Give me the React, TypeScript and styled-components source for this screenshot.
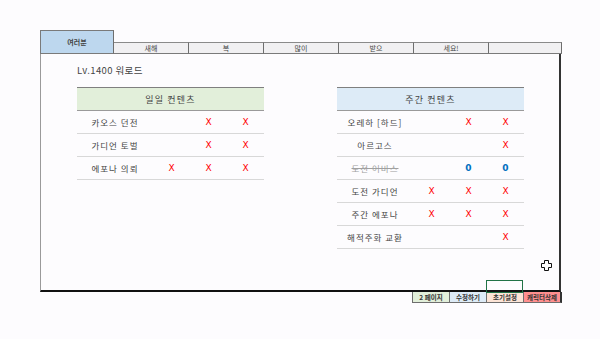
import React from "react";
import styled, { createGlobalStyle } from "styled-components";

const Global = createGlobalStyle`
  html, body { margin: 0; padding: 0; background: #fdfcfe; }
  body { font-family: "Noto Sans CJK KR", "Noto Sans", sans-serif; }
`;

const Page = styled.div`
  width: 600px;
  height: 339px;
  padding: 30px 0 0 40px;
  box-sizing: border-box;
  background: #fdfcfe;
`;

const TabBar = styled.div`
  display: flex;
  align-items: flex-end;
  width: 522px;
`;

const Tab = styled.div<{ $active?: boolean }>`
  width: ${(p) => (p.$active ? "74px" : "75px")};
  height: ${(p) => (p.$active ? "22px" : "10px")};
  box-sizing: content-box;
  display: flex;
  align-items: center;
  justify-content: center;
  font-size: 7px;
  line-height: 1;
  color: #444;
  font-weight: ${(p) => (p.$active ? 700 : 400)};
  background: ${(p) => (p.$active ? "#bdd7ee" : "#f1f0f2")};
  border-top: 1px solid ${(p) => (p.$active ? "#7a7a7a" : "#8a8a8a")};
  border-right: 1px solid #6e6e6e;
  border-bottom: 1px solid #7a7a7a;
  &:first-child { border-left: 1px solid #7a7a7a; width: 73px; }
  &:last-child { width: 73px; }
`;

const Panel = styled.div`
  position: relative;
  width: 521px;
  height: 238px;
  border-left: 1px solid #9a9a9a;
  border-right: 2px solid #333;
  border-bottom: 2px solid #111;
  box-sizing: border-box;
  padding: 10px 0 0 36px;
  display: flex;
  flex-direction: column;
`;

const Title = styled.div`
  font-size: 9.5px;
  color: #444;
  height: 12px;
  line-height: 12px;
  letter-spacing: 0.4px;
`;

const Tables = styled.div`
  display: flex;
  gap: 73px;
  margin-top: 11px;
`;

const Table = styled.div`
  width: 187px;
  display: flex;
  flex-direction: column;
`;

const Header = styled.div<{ $bg: string }>`
  height: 22px;
  background: ${(p) => p.$bg};
  border-top: 1px solid #7f7f7f;
  border-bottom: 1px solid #9a9a9a;
  display: flex;
  align-items: center;
  justify-content: center;
  font-size: 9px;
  color: #444;
  letter-spacing: 1.2px;
`;

const Row = styled.div`
  height: 22px;
  display: grid;
  grid-template-columns: 76px 37px 37px 37px;
  align-items: center;
  border-bottom: 1px solid #d8d8d8;
`;

const Name = styled.div<{ $strike?: boolean }>`
  text-align: center;
  font-size: 8.5px;
  letter-spacing: 1px;
  color: ${(p) => (p.$strike ? "#a0a0a0" : "#444")};
  text-decoration: ${(p) => (p.$strike ? "line-through" : "none")};
`;

const Mark = styled.div<{ $kind: string }>`
  text-align: center;
  font-family: "DejaVu Sans", sans-serif;
  font-size: 9px;
  font-weight: ${(p) => (p.$kind === "O" ? 700 : 400)};
  color: ${(p) => (p.$kind === "O" ? "#0070c0" : "#ff0000")};
`;

const Footer = styled.div`
  display: flex;
  width: 522px;
  justify-content: flex-end;
`;

const FootTab = styled.div<{ $bg: string }>`
  width: 36px;
  height: 10px;
  background: ${(p) => p.$bg};
  border-right: 1px solid #6e6e6e;
  border-bottom: 1px solid #6e6e6e;
  display: flex;
  align-items: center;
  justify-content: center;
  font-size: 6.5px;
  font-weight: 700;
  color: #333;
  &:first-child { border-left: 1px solid #6e6e6e; }
  &:last-child { border-right: 2px solid #333; }
`;

const Selection = styled.div`
  position: absolute;
  left: 445px;
  top: 226px;
  width: 35px;
  height: 11px;
  border: 1px solid #217346;
`;

const Cursor = styled.svg`
  position: absolute;
  left: 500px;
  top: 206px;
`;

type Item = { name: string; marks: string[]; strike?: boolean };

const daily: Item[] = [
  { name: "카오스 던전", marks: ["", "X", "X"] },
  { name: "가디언 토벌", marks: ["", "X", "X"] },
  { name: "에포나 의뢰", marks: ["X", "X", "X"] },
];

const weekly: Item[] = [
  { name: "오레하 [하드]", marks: ["", "X", "X"] },
  { name: "아르고스", marks: ["", "", "X"] },
  { name: "도전 어비스", marks: ["", "0", "0"], strike: true },
  { name: "도전 가디언", marks: ["X", "X", "X"] },
  { name: "주간 에포나", marks: ["X", "X", "X"] },
  { name: "해적주화 교환", marks: ["", "", "X"] },
];

const ContentTable = ({ title, bg, items }: { title: string; bg: string; items: Item[] }) => (
  <Table>
    <Header $bg={bg}>{title}</Header>
    {items.map((it) => (
      <Row key={it.name}>
        <Name $strike={it.strike}>{it.name}</Name>
        {it.marks.map((m, i) => (
          <Mark key={i} $kind={m === "0" ? "O" : "X"}>{m}</Mark>
        ))}
      </Row>
    ))}
  </Table>
);

export default function App() {
  return (
    <Page>
      <Global />
      <TabBar>
        <Tab $active>여러분</Tab>
        <Tab>새해</Tab>
        <Tab>복</Tab>
        <Tab>많이</Tab>
        <Tab>받으</Tab>
        <Tab>세요!</Tab>
        <Tab></Tab>
      </TabBar>
      <Panel>
        <Title>Lv.1400 워로드</Title>
        <Tables>
          <ContentTable title="일일 컨텐츠" bg="#e2efda" items={daily} />
          <ContentTable title="주간 컨텐츠" bg="#ddebf7" items={weekly} />
        </Tables>
        <Selection />
        <Cursor width="11" height="11" viewBox="0 0 11 11">
          <path d="M3.5 0.5h4v3h3v4h-3v3h-4v-3h-3v-4h3z" fill="#fff" stroke="#111" strokeWidth="1" />
        </Cursor>
      </Panel>
      <Footer>
        <FootTab $bg="#e2efda">2 페이지</FootTab>
        <FootTab $bg="#ddebf7">수정하기</FootTab>
        <FootTab $bg="#fce4d6">초기설정</FootTab>
        <FootTab $bg="#ff8f8f">캐릭터삭제</FootTab>
      </Footer>
    </Page>
  );
}
